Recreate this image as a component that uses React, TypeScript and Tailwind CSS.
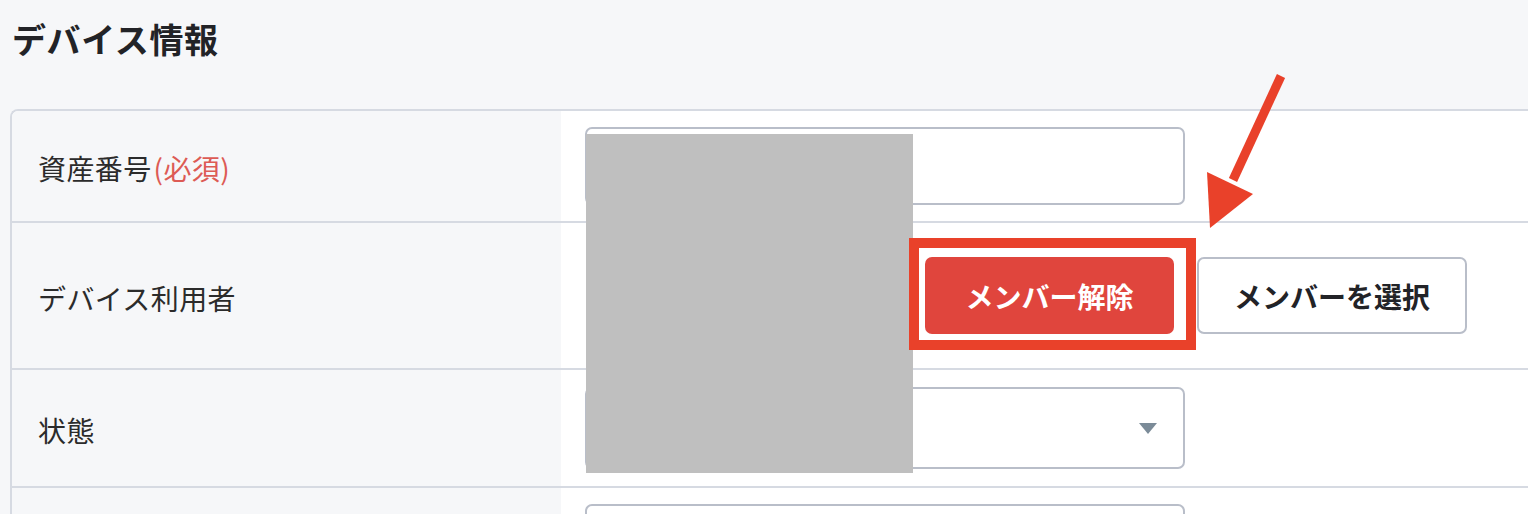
import React from "react";

const FONT = '"Noto Sans CJK JP", "Noto Sans", sans-serif';

function Label({ children }: { children: React.ReactNode }) {
  return (
    <div className="flex items-center pl-[26px] bg-[#f6f7f9] text-[28px] leading-[40px] text-[#2b2b2b] pt-[4px] tracking-[0.4px]">
      {children}
    </div>
  );
}

function TextInput() {
  return <div className="w-[600px] h-[78px] rounded-[7px] border-2 border-[#b9bec9] bg-white" />;
}

function SelectBox() {
  return (
    <div className="w-[600px] h-[82px] rounded-[7px] border-2 border-[#b9bec9] bg-white flex items-center justify-end pr-[26px]">
      <svg width="18" height="11" viewBox="0 0 18 11">
        <polygon points="0,0 18,0 9,11" fill="#7b8b98" />
      </svg>
    </div>
  );
}

export default function App() {
  return (
    <div
      className="relative w-[1528px] h-[514px] overflow-hidden bg-[#f6f7f9]"
      style={{ fontFamily: FONT }}
    >
      <h2 className="pl-[12px] pt-[15px] text-[34px] leading-[48px] font-bold text-[#222327] tracking-[0.6px]">
        デバイス情報
      </h2>

      <div className="ml-[10px] mt-[46px] w-[1600px] border-l-2 border-t-2 border-[#d6dae2] rounded-tl-[8px] overflow-hidden bg-white">
        {/* 資産番号 */}
        <div className="grid grid-cols-[549px_1fr] h-[112px] border-b-2 border-[#d6dae2]">
          <Label>
            資産番号<span className="ml-[2px] text-[#dd5b55]">(必須)</span>
          </Label>
          <div className="flex items-center pl-[24px] bg-white">
            <TextInput />
          </div>
        </div>

        {/* デバイス利用者 */}
        <div className="grid grid-cols-[549px_1fr] h-[147px] border-b-2 border-[#d6dae2]">
          <Label>デバイス利用者</Label>
          <div className="flex items-center pl-[24px] bg-white">
            <div className="w-[328px]" />
            <div className="relative ml-[12px] flex">
              <div className="absolute z-20 left-[-16px] right-[-22px] top-[-19px] bottom-[-16px] border-[10px] border-[#e9412a]" />
              <button className="relative w-[249px] h-[77px] rounded-[7px] bg-[#e0453d] text-white text-[28px] font-bold">
                メンバー解除
              </button>
            </div>
            <button className="ml-[23px] w-[270px] h-[77px] rounded-[7px] border-2 border-[#b9bec9] bg-white text-[#222327] text-[28px] font-bold">
              メンバーを選択
            </button>
          </div>
        </div>

        {/* 状態 */}
        <div className="grid grid-cols-[549px_1fr] h-[118px] border-b-2 border-[#d6dae2]">
          <Label>状態</Label>
          <div className="flex items-center pl-[24px] bg-white">
            <SelectBox />
          </div>
        </div>

        {/* 次の項目 */}
        <div className="grid grid-cols-[549px_1fr] h-[100px]">
          <div className="bg-[#f6f7f9]" />
          <div className="pl-[24px] pt-[16px] bg-white">
            <TextInput />
          </div>
        </div>
      </div>

      {/* 伏せ字 */}
      <div className="absolute z-10 left-[586px] top-[134px] w-[327px] h-[339px] bg-[#bfbfbf]" />

      {/* 矢印 */}
      <svg className="absolute z-20 left-0 top-0" width="1528" height="514" viewBox="0 0 1528 514">
        <line x1="1281" y1="76" x2="1233" y2="180" stroke="#e9412a" strokeWidth="9" />
        <polygon points="1207,172 1253,194 1210,228" fill="#e9412a" />
      </svg>
    </div>
  );
}
